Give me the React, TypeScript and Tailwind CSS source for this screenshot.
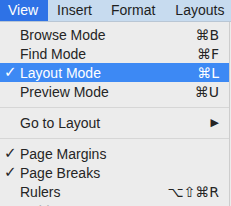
import React from "react";

const font = { fontFamily: '"Liberation Sans", "DejaVu Sans", Arial, sans-serif' };

type Item = { label: string; check?: boolean; shortcut?: string; active?: boolean; sub?: boolean; disabled?: boolean };

function Row({ item }: { item: Item }) {
  const base = item.active ? "bg-[#3d89f4] text-white" : item.disabled ? "text-[#b3b3b3]" : "text-[#252525]";
  return (
    <div className={`flex h-[19px] items-center text-[14px] leading-none ${base}`}>
      <div className="w-[20px] shrink-0 pl-[4px] text-[15px]" style={{ fontFamily: '"DejaVu Sans", sans-serif' }}>
        {item.check ? "✓" : ""}
      </div>
      <div className="flex-1">{item.label}</div>
      {item.shortcut && (
        <div className="pr-[10px] text-[14px]" style={{ fontFamily: '"DejaVu Sans", sans-serif' }}>
          {item.shortcut}
        </div>
      )}
      {item.sub && <div className="pr-[10px] text-[11px]" style={{ fontFamily: '"DejaVu Sans", sans-serif' }}>▶</div>}
    </div>
  );
}

function Sep() {
  return (
    <div className="flex h-[12px] items-center">
      <div className="h-px w-full bg-[#d6d6d6]" />
    </div>
  );
}

export default function App() {
  return (
    <div className="h-[206px] w-[231px] overflow-hidden bg-[#ececec]" style={font}>
      <div className="flex h-[22px] items-center border-b border-[#b9c6d4] bg-[#c7dbef] text-[14px] text-[#1e1e1e]">
        <div className="flex h-full w-[48px] items-center bg-[#2e72e6] pl-[8px] text-white">View</div>
        <div className="pl-[9px]">Insert</div>
        <div className="pl-[19px]">Format</div>
        <div className="pl-[20px]">Layouts</div>
      </div>
      <div className="w-[230px] border-r border-[#cdcdcd] pt-[3px] h-[184px]">
        <Row item={{ label: "Browse Mode", shortcut: "⌘B" }} />
        <Row item={{ label: "Find Mode", shortcut: "⌘F" }} />
        <Row item={{ label: "Layout Mode", shortcut: "⌘L", check: true, active: true }} />
        <Row item={{ label: "Preview Mode", shortcut: "⌘U" }} />
        <Sep />
        <Row item={{ label: "Go to Layout", sub: true }} />
        <Sep />
        <Row item={{ label: "Page Margins", check: true }} />
        <Row item={{ label: "Page Breaks", check: true }} />
        <Row item={{ label: "Rulers", shortcut: "⌥⇧⌘R" }} />
        <Row item={{ label: "Guides", disabled: true }} />
      </div>
    </div>
  );
}
